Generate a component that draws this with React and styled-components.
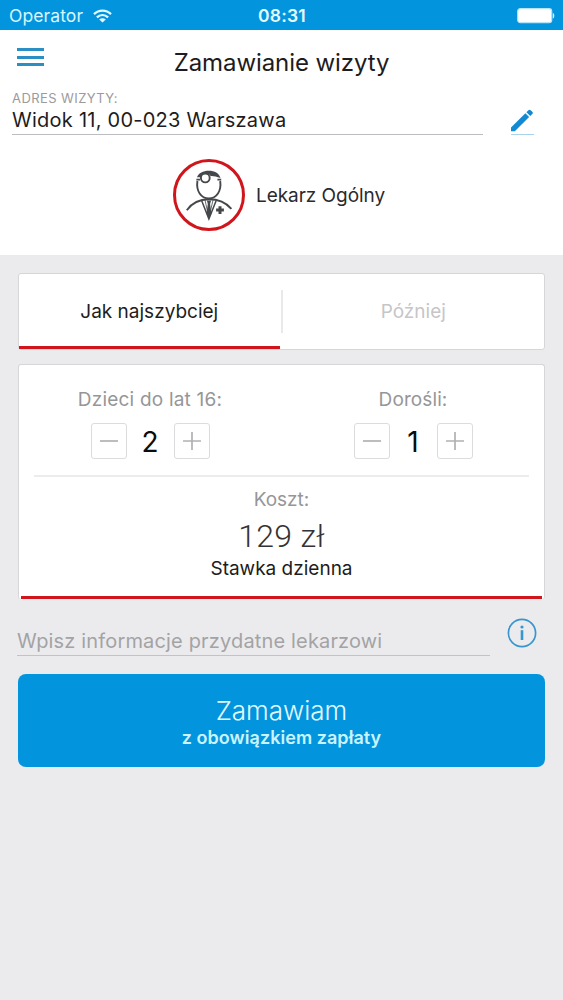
import React from 'react';
import styled, { createGlobalStyle } from 'styled-components';

const colors = {
  blue: '#0394de',
  icon: '#2b8fc4',
  red: '#d0161c',
  background: '#ebebed',
  border: '#d6d5d8',
  text: '#1d1c20',
  muted: '#969698',
};

const GlobalStyle = createGlobalStyle`
  * {
    box-sizing: border-box;
  }

  body {
    margin: 0;
    background: ${colors.background};
    font-family: Inter, 'Liberation Sans', sans-serif;
    color: ${colors.text};
  }

  button,
  input {
    font-family: inherit;
    padding: 0;
    border: 0;
    background: none;
  }
`;

const Screen = styled.div`
  display: flex;
  flex-direction: column;
  width: 563px;
  height: 1000px;
  overflow: hidden;
  background: ${colors.background};
`;

// Text line, used for every label on the screen
const Text = styled.span`
  display: block;
  white-space: nowrap;
  font-size: ${props => props.size}px;
  line-height: ${props => props.line || 24}px;
  font-weight: ${props => props.weight || 400};
  letter-spacing: ${props => props.spacing || 0}px;
  color: ${props => props.color || colors.text};
`;

const Price = styled(Text)`
  font-family: Roboto, Inter, sans-serif;
`;

// Status bar
const StatusBar = styled.div`
  display: grid;
  grid-template-columns: 1fr auto 1fr;
  align-items: center;
  flex: none;
  height: 30px;
  padding: 1px 8px 0 9px;
  background: ${colors.blue};
`;

const Carrier = styled.div`
  display: flex;
  align-items: center;
  gap: 10px;
`;

const BatteryIcon = styled.svg`
  justify-self: end;
`;

// Header
const Header = styled.header`
  flex: none;
  height: 225px;
  background: #fff;
`;

const TitleRow = styled.div`
  display: grid;
  grid-template-columns: 60px 1fr 60px;
  height: 60px;
`;

const MenuButton = styled.button`
  display: flex;
  flex-direction: column;
  gap: 4.5px;
  width: 44px;
  padding: 18px 0 0 17px;
`;

const MenuLine = styled.span`
  height: 3px;
  background: ${colors.icon};
`;

const Title = styled.h1`
  margin: 17px 0 0;
  font-size: 24px;
  font-weight: 400;
  line-height: 32px;
  letter-spacing: -0.08px;
  text-align: center;
  white-space: nowrap;
`;

const AddressRow = styled.div`
  display: flex;
  justify-content: space-between;
  height: 45px;
  padding: 0 29px 0 12px;
`;

const Address = styled.div`
  width: 471px;
  border-bottom: 1px solid #bdbcc0;
`;

const EditButton = styled.button`
  display: flex;
  align-items: flex-end;
  width: 23px;
  padding-bottom: 1px;
  border-bottom: 1px solid #a9d3ea;
`;

const Specialist = styled.div`
  display: flex;
  align-items: center;
  gap: 11px;
  height: 120px;
  padding-left: 173px;
`;

const SpecialistName = styled(Text)`
  padding-top: 2px;
`;

const Avatar = styled.div`
  width: 72px;
  height: 72px;
  border: 3px solid ${colors.red};
  border-radius: 50%;
`;

// Cards
const Content = styled.main`
  display: flex;
  flex-direction: column;
  padding: 18px 18px 0;
`;

const Card = styled.section`
  background: #fff;
  border: 1px solid ${colors.border};
  border-radius: 3px;
`;

const Tabs = styled(Card)`
  display: flex;
  height: 77px;
`;

const Tab = styled.button`
  display: flex;
  align-items: center;
  justify-content: center;
  width: ${props => (props.active ? 261 : 262)}px;
  height: 75px;
  padding-top: 3px;
  border-bottom: 3px solid ${props => (props.active ? colors.red : 'transparent')};
`;

const TabDivider = styled.span`
  width: 2px;
  height: 43px;
  margin: 16px 0 0 1px;
  background: #e9e9eb;
`;

const OrderCard = styled(Card)`
  display: flex;
  flex-direction: column;
  height: 235px;
  margin-top: 14px;
  padding: 0 2px;
  border-bottom: 0;
`;

const Counters = styled.div`
  display: flex;
  justify-content: space-between;
  height: 112px;
  margin: 0 13px;
  border-bottom: 2px solid #ececee;
`;

const Counter = styled.div`
  display: flex;
  flex-direction: column;
  align-items: center;
  width: 232px;
  padding-top: 23px;
`;

const Stepper = styled.div`
  display: flex;
  align-items: center;
  margin-top: 11px;
`;

const StepButton = styled.button`
  display: flex;
  align-items: center;
  justify-content: center;
  width: 36px;
  height: 36px;
  border: 1px solid #dcdbde;
  border-radius: 3px;
`;

const Count = styled.span`
  width: 47px;
  padding-top: 2px;
  font-size: 28px;
  line-height: 34px;
  color: #0c0c0e;
  text-align: center;
`;

const Cost = styled.div`
  display: flex;
  flex: 1;
  flex-direction: column;
  align-items: center;
  padding-top: 11px;
  border-bottom: 3px solid ${colors.red};
`;

// Note and submit
const NoteRow = styled.div`
  display: flex;
  justify-content: space-between;
  height: 57px;
  margin: 0 8px 0 -1px;
`;

const NoteInput = styled.input`
  width: 473px;
  height: 38px;
  margin-top: 19px;
  padding-top: 8px;
  border-bottom: 1px solid #c3c2c5;
  border-radius: 0;
  font-size: 20px;
  letter-spacing: 0.16px;
  outline: 0;

  &::placeholder {
    color: #a3a3a5;
    opacity: 1;
  }
`;

const InfoButton = styled.button`
  display: flex;
  align-self: flex-start;
  margin-top: 19px;
`;

const SubmitButton = styled.button`
  display: flex;
  flex-direction: column;
  align-items: center;
  height: 93px;
  margin-top: 18px;
  padding-top: 21px;
  border-radius: 8px;
  background: ${colors.blue};
`;

const WifiIcon = () => (
  <svg width="19" height="14" viewBox="0 0 19 14" fill="none" stroke="#e4fbff" strokeWidth="2.3">
    <path d="M1 5.1C5.8.4 13.2.4 18 5.1" />
    <path d="M3.9 8.4C7.2 5.3 11.8 5.3 15.1 8.4" />
    <path d="M9.5 13.5 6.2 10.5C8 8.9 11 8.9 12.8 10.5Z" fill="#e4fbff" stroke="none" />
  </svg>
);

const PencilIcon = () => (
  <svg width="24" height="24" viewBox="0 0 24 24" fill="#1389d2">
    <path d="M0 18.8 15 4 18.9 7.8 4 22.8H0Z" />
    <path d="M16.1 2.9 18.2.8C19 0 19.8 0 20.6.8L22.2 2.4C23 3.2 23 4 22.2 4.8L20.1 6.9Z" />
  </svg>
);

const DoctorIcon = () => (
  <svg width="66" height="66" viewBox="176 162 66 66" fill="none" stroke="#45484b" strokeWidth="1.9">
    <path d="M197.4 181C196 191 201 198.4 208.8 198.4S221.6 191 220.2 181" />
    <path d="M196.4 179.6H200M217.4 179.6H221.2" strokeWidth="1.6" />
    <path
      d="M197 177.3C198.6 173 203 170.8 208.8 170.8S219 173 220.5 178C216.5 176.6 213.5 175.8 210.6 176C209 173.2 202.5 172.6 200.8 177.2Z"
      fill="#45484b"
      stroke="none"
    />
    <circle cx="205.3" cy="178" r="4.4" fill="#fff" />
    <path d="M186.8 210.2C191.5 203.5 199.5 199.2 208.8 199.2S226 202.5 231.4 208.8" />
    <path d="M201.6 200.5 208.9 219 216.3 200.3" strokeWidth="1.5" />
    <path d="M205 200 208.3 215M213 200 209.6 215" strokeWidth="0.8" />
    <path d="M206.9 200.4H211.1L210.1 204 211.4 213.5 208.9 219 206.5 213.5 207.8 204Z" fill="#45484b" stroke="none" />
    <path d="M220 206.2V214M216.1 210.1H223.9" strokeWidth="3" />
  </svg>
);

const StepIcon = ({ plus }) => (
  <svg width="18" height="18" viewBox="0 0 18 18" stroke="#b1b0b3" strokeWidth="1.7">
    <path d={plus ? 'M0 9H18M9 0V18' : 'M0 9H18'} />
  </svg>
);

const InfoIcon = () => (
  <svg width="30" height="30" viewBox="0 0 30 30" fill="none" stroke="#3795cf">
    <circle cx="15" cy="15" r="13.6" strokeWidth="1.7" />
    <path d="M15 12.2V22" strokeWidth="2.6" />
    <circle cx="15" cy="9" r="1.6" fill="#3795cf" stroke="none" />
  </svg>
);

const PersonCounter = ({ label, value, spacing }) => (
  <Counter>
    <Text size={19} color={colors.muted} spacing={spacing}>{label}</Text>
    <Stepper>
      <StepButton><StepIcon /></StepButton>
      <Count>{value}</Count>
      <StepButton><StepIcon plus /></StepButton>
    </Stepper>
  </Counter>
);

const App = () => {
  return (
    <>
      <GlobalStyle />
      <Screen>
        <StatusBar>
          <Carrier>
            <Text size={17.5} spacing={0.1} color="#d8f7ff">Operator</Text>
            <WifiIcon />
          </Carrier>
          <Text size={17.5} weight={600} spacing={0.2} color="#e4fbff">08:31</Text>
          <BatteryIcon width="38" height="16" viewBox="0 0 38 16">
            <rect x="0.7" y="0.7" width="34" height="14" rx="2.6" fill="#fff" stroke="#b9e3f8" strokeWidth="1.2" />
            <path d="M35.8 5V10.5C37.8 10 37.8 5.5 35.8 5Z" fill="#d8f2fd" />
          </BatteryIcon>
        </StatusBar>

        <Header>
          <TitleRow>
            <MenuButton>
              <MenuLine />
              <MenuLine />
              <MenuLine />
            </MenuButton>
            <Title>Zamawianie wizyty</Title>
          </TitleRow>
          <AddressRow>
            <Address>
              <Text size={13} line={17} color="#9b9a9d" spacing={0.42}>ADRES WIZYTY:</Text>
              <Text size={20} line={26} spacing={0.25}>Widok 11, 00-023 Warszawa</Text>
            </Address>
            <EditButton><PencilIcon /></EditButton>
          </AddressRow>
          <Specialist>
            <Avatar><DoctorIcon /></Avatar>
            <SpecialistName size={19} spacing={-0.05} color="#2a292d">Lekarz Ogólny</SpecialistName>
          </Specialist>
        </Header>

        <Content>
          <Tabs>
            <Tab active><Text size={19}>Jak najszybciej</Text></Tab>
            <TabDivider />
            <Tab><Text size={19} color="#c6c5c8">Później</Text></Tab>
          </Tabs>

          <OrderCard>
            <Counters>
              <PersonCounter label="Dzieci do lat 16:" value={2} spacing={0.2} />
              <PersonCounter label="Dorośli:" value={1} spacing={0.1} />
            </Counters>
            <Cost>
              <Text size={19} color={colors.muted}>Koszt:</Text>
              <Price size={32} line={48} weight={300} spacing={0.3} color="#333236">129 zł</Price>
              <Text size={19} line={17}>Stawka dzienna</Text>
            </Cost>
          </OrderCard>

          <NoteRow>
            <NoteInput placeholder="Wpisz informacje przydatne lekarzowi" />
            <InfoButton><InfoIcon /></InfoButton>
          </NoteRow>

          <SubmitButton>
            <Text size={26} line={32} weight={300} color="#e4fbff">Zamawiam</Text>
            <Text size={18} line={21} weight={600} spacing={0.05} color="#c9f4ff">z obowiązkiem zapłaty</Text>
          </SubmitButton>
        </Content>
      </Screen>
    </>
  );
};

export default App;
